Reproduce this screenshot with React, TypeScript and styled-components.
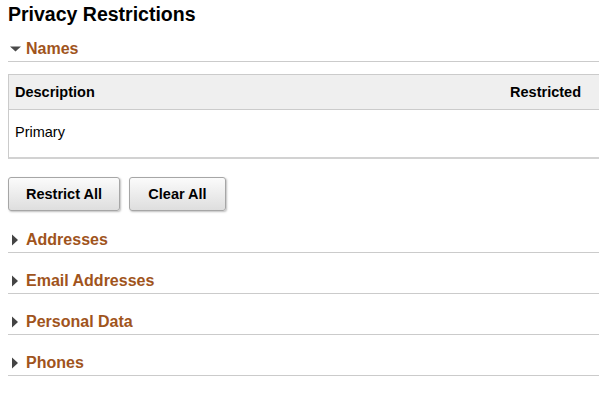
import React, { FunctionComponent } from "react";
import styled, { createGlobalStyle } from "styled-components";

const GlobalStyle = createGlobalStyle`
  html, body {
    margin: 0;
    padding: 0;
    background: #fff;
  }
  body {
    font-family: "Liberation Sans", Arial, sans-serif;
    color: #000;
  }
`;

const Page = styled.div`
  padding: 3px 0 0 8px;
  overflow: hidden;
`;

const Title = styled.h1`
  margin: 0;
  font-size: 19.5px;
  font-weight: bold;
  line-height: 22px;
  color: #000;
`;

const Section = styled.div<{ $open?: boolean }>`
  margin-top: ${(p) => (p.$open ? "11px" : "0")};
`;

const SectionHeader = styled.div<{ $open?: boolean }>`
  display: flex;
  align-items: center;
  height: 25px;
  border-bottom: 1px solid #cbcbcb;
  margin-bottom: ${(p) => (p.$open ? "12px" : "15px")};
`;

const Toggle = styled.span`
  display: flex;
  align-items: center;
  width: 18px;
`;

const SectionTitle = styled.span`
  font-size: 16px;
  font-weight: bold;
  color: #a0541c;
`;

const Grid = styled.div`
  border: 1px solid #cbcbcb;
  border-bottom: 2px solid #d2d2d2;
  border-right: none;
  margin-right: -2px;
`;

const GridRow = styled.div<{ $head?: boolean }>`
  display: flex;
  justify-content: space-between;
  align-items: center;
  box-sizing: border-box;
  padding: ${(p) => (p.$head ? "0 20px 0 6px" : "0 20px 4px 6px")};
  height: ${(p) => (p.$head ? "35px" : "47px")};
  background: ${(p) => (p.$head ? "#efefef" : "#fff")};
  border-bottom: ${(p) => (p.$head ? "1px solid #cbcbcb" : "none")};
  font-size: 14.5px;
  font-weight: ${(p) => (p.$head ? "bold" : "normal")};
`;

const ButtonBar = styled.div`
  display: flex;
  gap: 9px;
  margin: 18px 0 16px;
`;

const Button = styled.button<{ $width: number }>`
  width: ${(p) => p.$width}px;
  height: 34px;
  border: 1px solid #a6a6a6;
  border-radius: 3px;
  background: linear-gradient(#fbfbfb, #dedede);
  box-shadow: 1px 1px 2px rgba(0, 0, 0, 0.25);
  font-family: "Liberation Sans", Arial, sans-serif;
  font-size: 14.5px;
  font-weight: bold;
  color: #000;
  padding: 0;
  cursor: pointer;
`;

const Arrow: FunctionComponent<{ open?: boolean }> = ({ open }) => (
  <svg width="18" height="12" viewBox="0 0 18 12">
    {open ? (
      <polygon points="2,3.5 13,3.5 7.5,8.5" fill="#4a4a4a" />
    ) : (
      <polygon points="4,0.5 10,6 4,11.5" fill="#444" />
    )}
  </svg>
);

const collapsed = ["Addresses", "Email Addresses", "Personal Data", "Phones"];

const App: FunctionComponent = () => (
  <Page>
    <GlobalStyle />
    <Title>Privacy Restrictions</Title>
    <Section $open>
      <SectionHeader $open>
        <Toggle>
          <Arrow open />
        </Toggle>
        <SectionTitle>Names</SectionTitle>
      </SectionHeader>
      <Grid>
        <GridRow $head>
          <span>Description</span>
          <span>Restricted</span>
        </GridRow>
        <GridRow>
          <span>Primary</span>
        </GridRow>
      </Grid>
      <ButtonBar>
        <Button $width={112}>Restrict All</Button>
        <Button $width={97}>Clear All</Button>
      </ButtonBar>
    </Section>
    {collapsed.map((name) => (
      <Section key={name}>
        <SectionHeader>
          <Toggle>
            <Arrow />
          </Toggle>
          <SectionTitle>{name}</SectionTitle>
        </SectionHeader>
      </Section>
    ))}
  </Page>
);

export default App;
